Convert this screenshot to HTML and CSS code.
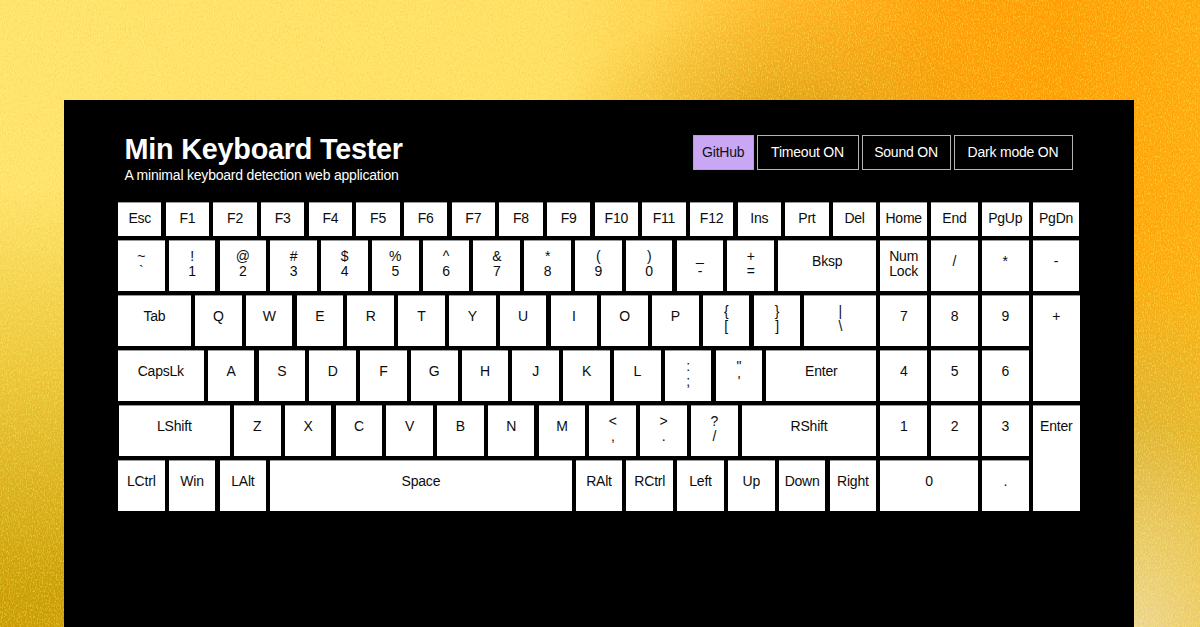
FILE: index.html
```
<!DOCTYPE html>
<html lang="en">
<head>
<meta charset="utf-8">
<title>Min Keyboard Tester</title>
<link rel="stylesheet" href="styles.css">
</head>
<body>
<svg class="grain" width="1200" height="627" aria-hidden="true">
  <filter id="grain" x="0" y="0" width="100%" height="100%" color-interpolation-filters="sRGB">
    <feTurbulence type="fractalNoise" baseFrequency="0.83 0.43" numOctaves="3" seed="4"/>
    <feColorMatrix values="0 0 0 0 1  0 0 0 0 0.98  0 0 0 0 0.4  3 0 0 0 -1.35"/>
  </filter>
  <filter id="shade" x="0" y="0" width="100%" height="100%" color-interpolation-filters="sRGB">
    <feTurbulence type="fractalNoise" baseFrequency="0.83 0.43" numOctaves="3" seed="9"/>
    <feColorMatrix values="0 0 0 0 0.92  0 0 0 0 0.65  0 0 0 0 0.1  1.4 0 0 0 -0.62"/>
  </filter>
  <rect width="1200" height="627" filter="url(#shade)"/>
  <rect width="1200" height="627" filter="url(#grain)"/>
</svg>
<main class="app">
  <header class="header">
    <div>
      <h1 class="title">Min Keyboard Tester</h1>
      <p class="subtitle">A minimal keyboard detection web application</p>
    </div>
    <nav class="actions">
      <a class="btn btn-github">GitHub</a>
      <button class="btn btn-timeout">Timeout ON</button>
      <button class="btn btn-sound">Sound ON</button>
      <button class="btn btn-dark">Dark mode ON</button>
    </nav>
  </header>
  <section class="keyboard">
    <div class="main">
      <div class="row row-fn">
        <div class="key">Esc</div><div class="key">F1</div><div class="key">F2</div><div class="key">F3</div><div class="key">F4</div><div class="key">F5</div><div class="key">F6</div><div class="key">F7</div><div class="key">F8</div><div class="key">F9</div><div class="key">F10</div><div class="key">F11</div><div class="key">F12</div><div class="key">Ins</div><div class="key">Prt</div><div class="key">Del</div>
      </div>
      <div class="row">
        <div class="key dual">~<br>`</div><div class="key dual">!<br>1</div><div class="key dual">@<br>2</div><div class="key dual">#<br>3</div><div class="key dual">$<br>4</div><div class="key dual">%<br>5</div><div class="key dual">^<br>6</div><div class="key dual">&amp;<br>7</div><div class="key dual">*<br>8</div><div class="key dual">(<br>9</div><div class="key dual">)<br>0</div><div class="key dual">_<br>-</div><div class="key dual">+<br>=</div><div class="key grow">Bksp</div>
      </div>
      <div class="row">
        <div class="key tab">Tab</div><div class="key">Q</div><div class="key">W</div><div class="key">E</div><div class="key">R</div><div class="key">T</div><div class="key">Y</div><div class="key">U</div><div class="key">I</div><div class="key">O</div><div class="key">P</div><div class="key dual">{<br>[</div><div class="key dual">}<br>]</div><div class="key dual grow">|<br>\</div>
      </div>
      <div class="row">
        <div class="key caps">CapsLk</div><div class="key">A</div><div class="key">S</div><div class="key">D</div><div class="key">F</div><div class="key">G</div><div class="key">H</div><div class="key">J</div><div class="key">K</div><div class="key">L</div><div class="key dual">:<br>;</div><div class="key dual">"<br>'</div><div class="key grow">Enter</div>
      </div>
      <div class="row">
        <div class="key shift">LShift</div><div class="key">Z</div><div class="key">X</div><div class="key">C</div><div class="key">V</div><div class="key">B</div><div class="key">N</div><div class="key">M</div><div class="key dual">&lt;<br>,</div><div class="key dual">&gt;<br>.</div><div class="key dual">?<br>/</div><div class="key grow">RShift</div>
      </div>
      <div class="row">
        <div class="key">LCtrl</div><div class="key">Win</div><div class="key">LAlt</div><div class="key grow">Space</div><div class="key">RAlt</div><div class="key">RCtrl</div><div class="key">Left</div><div class="key">Up</div><div class="key">Down</div><div class="key">Right</div>
      </div>
    </div>
    <div class="numpad">
      <div class="key short">Home</div><div class="key short">End</div><div class="key short">PgUp</div><div class="key short">PgDn</div>
      <div class="key dual">Num<br>Lock</div><div class="key">/</div><div class="key">*</div><div class="key">-</div>
      <div class="key">7</div><div class="key">8</div><div class="key">9</div><div class="key tall">+</div>
      <div class="key">4</div><div class="key">5</div><div class="key">6</div>
      <div class="key">1</div><div class="key">2</div><div class="key">3</div><div class="key tall">Enter</div>
      <div class="key wide">0</div><div class="key">.</div>
    </div>
  </section>
</main>
</body>
</html>
```
FILE: styles.css
```
* {
  box-sizing: border-box;
}

body {
  margin: 0;
  width: 1200px;
  height: 627px;
  overflow: hidden;
  position: relative;
  padding: 100px 66px 0 64px;
  font-family: "Liberation Sans", Arial, sans-serif;
  font-size: 14px;
  letter-spacing: -0.21px;
  line-height: 15.24px;
  background:
    radial-gradient(ellipse 170px 220px at 1130px 640px, #ecd8a4 0%, rgba(236, 214, 140, 0) 100%),
    radial-gradient(ellipse 170px 170px at 1110px 450px, rgba(212, 178, 66, 0.8) 0%, rgba(215, 180, 60, 0) 100%),
    radial-gradient(ellipse 230px 130px at 790px 130px, rgba(208, 152, 14, 0.85) 0%, rgba(214, 158, 20, 0.4) 45%, rgba(220, 165, 25, 0) 100%),
    linear-gradient(180deg, rgba(200, 155, 5, 0) 30%, rgba(222, 175, 20, 0.55) 58%, rgba(198, 152, 0, 0.95) 95%) 0 0 / 200px 627px no-repeat,
    linear-gradient(180deg, rgba(245, 190, 20, 0) 35%, rgba(234, 190, 40, 0.9) 85%) 1000px 0 / 200px 627px no-repeat,
    linear-gradient(96deg, #ffe472 0%, #ffe068 44%, #ffd252 52%, #ffb428 62%, #ff9e08 74%, #ff9c02 84%, #ffae10 100%);
}

.grain {
  position: absolute;
  left: 0;
  top: 0;
  opacity: 0.4;
}

.app {
  position: relative;
  height: 527px;
  background: #000;
  color: #fff;
  padding: 35px 54px 0;
}

.header {
  display: flex;
  justify-content: space-between;
  align-items: flex-start;
  height: 67px;
  padding: 0 7.5px 0 6.5px;
}

.title {
  margin: 0;
  font-size: 28.8px;
  letter-spacing: -0.23px;
  line-height: 29px;
}

.subtitle {
  margin: 4px 0 0;
}

.actions {
  display: flex;
  gap: 3px;
}

.btn {
  display: flex;
  align-items: center;
  justify-content: center;
  height: 35px;
  margin: 0;
  padding: 1px 0 0;
  border: 1px solid #b4b4b4;
  background: #000;
  color: #fff;
  font: inherit;
  letter-spacing: inherit;
}

.btn-github {
  width: 60.5px;
  border-color: #b99adf;
  background: #c9a7f5;
  color: #111;
}

.btn-timeout {
  width: 102px;
}

.btn-sound {
  width: 89px;
}

.btn-dark {
  width: 119px;
}

.keyboard {
  display: flex;
  gap: 4.2px;
  color: #0c0c0c;
  text-align: center;
}

.main {
  display: flex;
  flex-direction: column;
  gap: 4px;
  width: 758.2px;
}

.row {
  display: flex;
  gap: 4.2px;
  height: 51px;
}

.key {
  flex: none;
  width: 46.6px;
  padding-top: 13px;
  border-top: 1px solid #999;
  background: #fff;
  white-space: nowrap;
}

.row-fn {
  height: 34px;
}

.row-fn .key {
  flex: 1;
  width: auto;
}

.row-fn .key,
.short {
  padding-top: 8px;
}

.dual {
  padding-top: 8px;
}

.grow {
  flex: 1;
}

.tab {
  width: 72.9px;
}

.caps {
  width: 85.6px;
}

.shift {
  width: 111px;
  margin-left: 0.8px;
}

.numpad {
  display: grid;
  grid-template-columns: repeat(4, 46.6px);
  grid-template-rows: 34px repeat(5, 51px);
  gap: 4px 4.2px;
}

.tall {
  grid-row: span 2;
  width: 47.2px;
}

.wide {
  grid-column: span 2;
  width: auto;
}
```
